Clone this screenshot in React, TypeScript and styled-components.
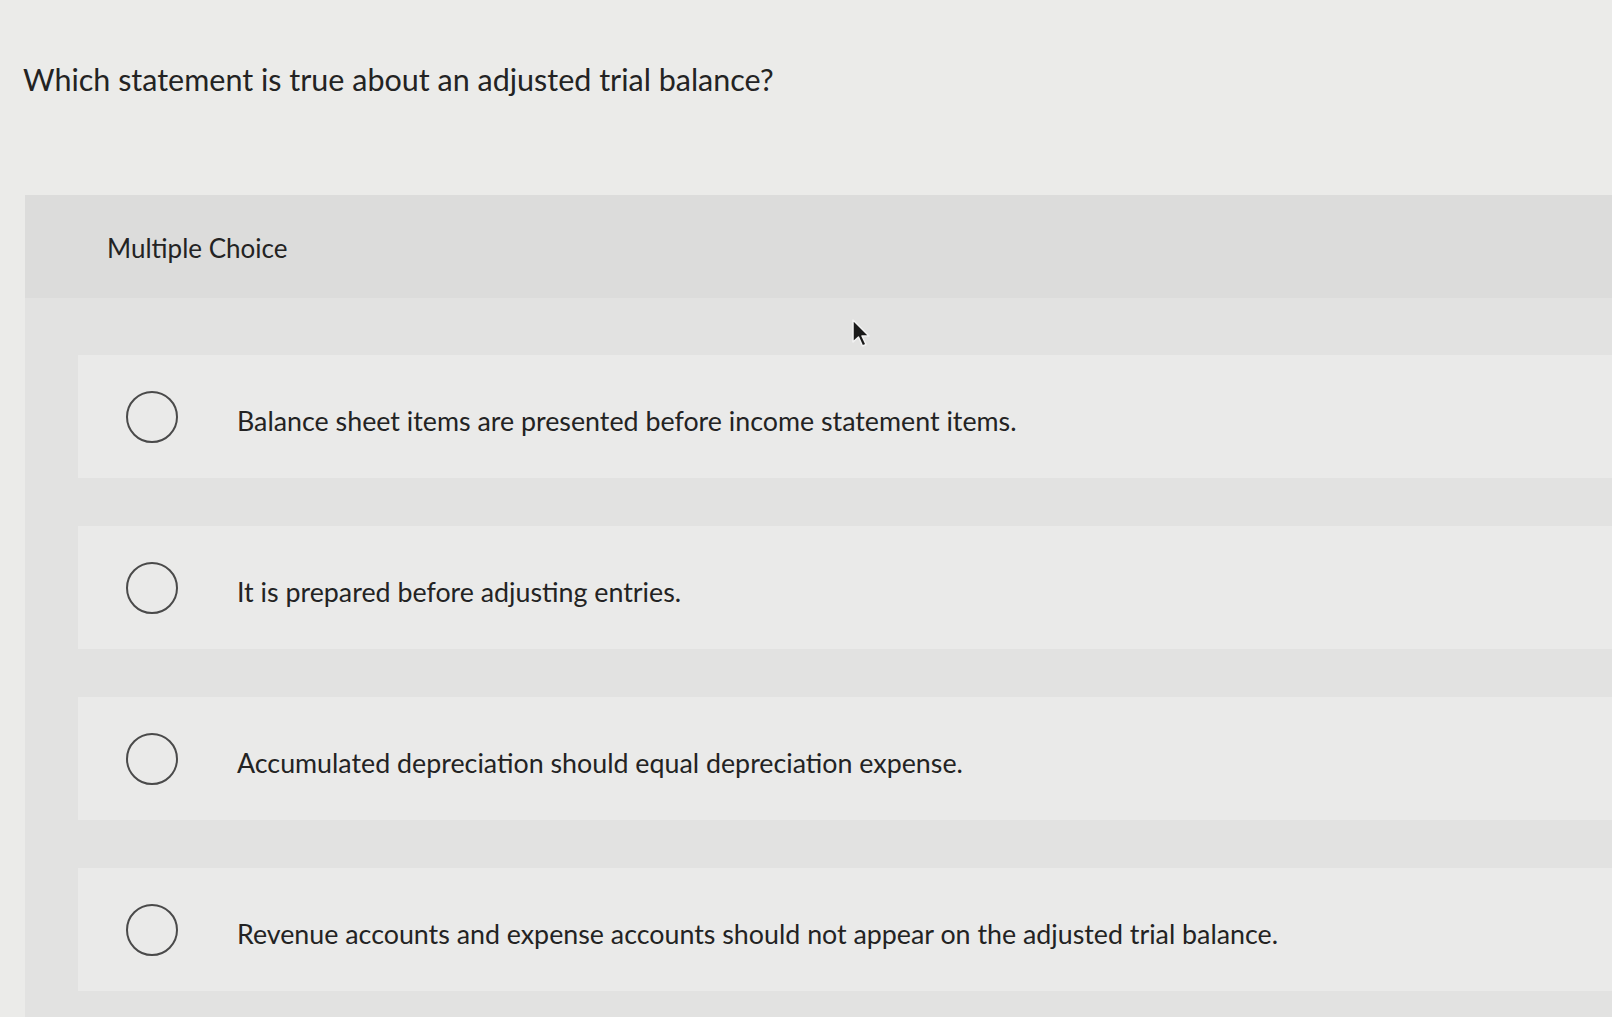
import React from "react";
import styled, { createGlobalStyle } from "styled-components";

const Global = createGlobalStyle`
  html, body { margin: 0; padding: 0; }
  body {
    background: #ebebe9;
    font-family: Lato, "Open Sans", "Liberation Sans", sans-serif;
    color: #222222;
    overflow: hidden;
  }
`;

const Page = styled.div`
  position: relative;
  width: 1612px;
  height: 1017px;
  overflow: hidden;
  padding-left: 23px;
  box-sizing: border-box;
`;

const Question = styled.h1`
  margin: 0;
  padding-top: 61px;
  height: 195px;
  box-sizing: border-box;
  font-size: 30.5px;
  line-height: 36px;
  font-weight: 400;
  color: #232323;
`;

const Panel = styled.section`
  margin-left: 2px;
  background: #e2e2e1;
  min-height: 900px;
`;

const PanelHeader = styled.div`
  height: 103px;
  box-sizing: border-box;
  padding: 37px 0 0 82px;
  background: #dcdcdb;
  font-size: 26px;
  line-height: 32px;
  color: #232323;
`;

const OptionList = styled.div`
  display: flex;
  flex-direction: column;
  gap: 48px;
  padding: 57px 0 0 53px;
`;

const Option = styled.label`
  display: flex;
  align-items: center;
  height: 123px;
  padding-left: 48px;
  background: #eaeae9;
  cursor: pointer;
`;

const Radio = styled.span`
  flex: none;
  width: 48px;
  height: 48px;
  border: 2px solid #4a4a4a;
  border-radius: 50%;
  background: transparent;
`;

const OptionText = styled.span`
  margin-left: 59px;
  padding-top: 8px;
  font-size: 26.8px;
  line-height: 32px;
  color: #232323;
`;

const Pointer = styled.svg`
  position: absolute;
  left: 851px;
  top: 318px;
`;

const options = [
  "Balance sheet items are presented before income statement items.",
  "It is prepared before adjusting entries.",
  "Accumulated depreciation should equal depreciation expense.",
  "Revenue accounts and expense accounts should not appear on the adjusted trial balance.",
];

export default function App() {
  return (
    <>
      <Global />
      <Page>
        <Question>Which statement is true about an adjusted trial balance?</Question>
        <Panel>
          <PanelHeader>Multiple Choice</PanelHeader>
          <OptionList>
            {options.map((o) => (
              <Option key={o}>
                <Radio />
                <OptionText>{o}</OptionText>
              </Option>
            ))}
          </OptionList>
        </Panel>
        <Pointer width="22" height="32" viewBox="0 0 22 32">
          <path
            d="M2 2 L2 24 L7.5 19 L11.5 28 L15 26.5 L11 18 L18 18 Z"
            fill="#1a1a1a"
            stroke="#f2f2f2"
            strokeWidth="1.5"
            strokeLinejoin="round"
          />
        </Pointer>
      </Page>
    </>
  );
}
